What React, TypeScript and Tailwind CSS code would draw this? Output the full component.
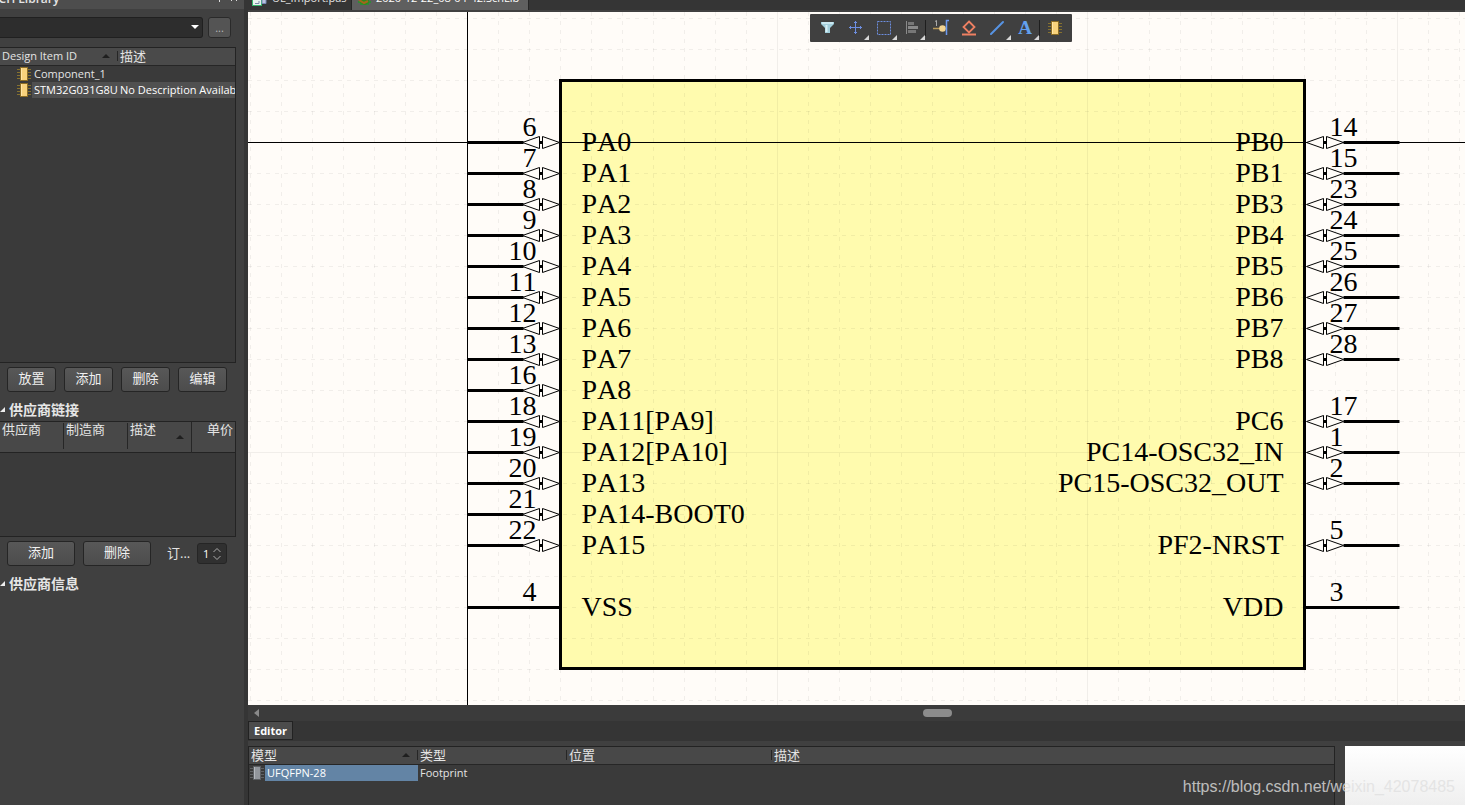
import { useState, type ReactNode } from "react";

type Pin = { row: number; num: string; name: string; plain?: boolean };

const GRID = 31;

const leftPins: Pin[] = [
  { row: 0, num: "6", name: "PA0" },
  { row: 1, num: "7", name: "PA1" },
  { row: 2, num: "8", name: "PA2" },
  { row: 3, num: "9", name: "PA3" },
  { row: 4, num: "10", name: "PA4" },
  { row: 5, num: "11", name: "PA5" },
  { row: 6, num: "12", name: "PA6" },
  { row: 7, num: "13", name: "PA7" },
  { row: 8, num: "16", name: "PA8" },
  { row: 9, num: "18", name: "PA11[PA9]" },
  { row: 10, num: "19", name: "PA12[PA10]" },
  { row: 11, num: "20", name: "PA13" },
  { row: 12, num: "21", name: "PA14-BOOT0" },
  { row: 13, num: "22", name: "PA15" },
  { row: 15, num: "4", name: "VSS", plain: true },
];

const rightPins: Pin[] = [
  { row: 0, num: "14", name: "PB0" },
  { row: 1, num: "15", name: "PB1" },
  { row: 2, num: "23", name: "PB3" },
  { row: 3, num: "24", name: "PB4" },
  { row: 4, num: "25", name: "PB5" },
  { row: 5, num: "26", name: "PB6" },
  { row: 6, num: "27", name: "PB7" },
  { row: 7, num: "28", name: "PB8" },
  { row: 9, num: "17", name: "PC6" },
  { row: 10, num: "1", name: "PC14-OSC32_IN" },
  { row: 11, num: "2", name: "PC15-OSC32_OUT" },
  { row: 13, num: "5", name: "PF2-NRST" },
  { row: 15, num: "3", name: "VDD", plain: true },
];

const buttonClass =
  "h-[25px] rounded-[3px] border border-[#252525] bg-linear-to-b from-[#585858] to-[#4c4c4c] text-[13px] leading-none text-[#f0f0f0]";

function ChipIcon({ grey = false }: { grey?: boolean }) {
  const leg = grey ? "#606265" : "#86712f";
  return (
    <svg width="14" height="14" viewBox="0 0 14 14" className="block" shapeRendering="crispEdges">
      <path d="M0 2.5H14M0 5.5H14M0 8.5H14M0 11.5H14" stroke={leg} />
      <rect x="3.5" y="0.5" width="7" height="13" fill={grey ? "#92969c" : "#f8d27c"} stroke={grey ? "#5c5f63" : "#8c6d25"} />
      <path d="M4.5 1V13" stroke={grey ? "#b4b8be" : "#ffe6a8"} />
    </svg>
  );
}

function SortArrow() {
  return (
    <svg width="8" height="4" viewBox="0 0 8 4" className="block shrink-0">
      <path d="M0 4L4 0L8 4Z" fill="#1f1f1f" />
    </svg>
  );
}

/* pair of arrows marking a bidirectional pin */
function IoArrows({ x }: { x: number }) {
  return (
    <g fill="#fffcf8" stroke="#000" strokeWidth="1">
      <path d={`M${x} 0L${x + 17} -6V6Z`} />
      <path d={`M${x + 37} 0L${x + 20} -6V6Z`} />
      <path d={`M${x + 17} 0H${x + 20}`} strokeWidth="3" />
    </g>
  );
}

function Schematic() {
  const columns = Array.from({ length: 80 }, (_, i) => i - 7);
  const rows = Array.from({ length: 50 }, (_, i) => i - 4);

  return (
    <svg className="absolute inset-0 h-full w-full [font-kerning:none]" role="img" aria-label="STM32G031G8U symbol">
      <g transform="translate(219.5 130.5)" fontFamily="'Liberation Serif', serif" fontSize="28">
        <rect x="93" y="-62" width="744" height="588" fill="#fffbae" />
        <g stroke="#000" strokeOpacity="0.055" shapeRendering="crispEdges">
          {columns.map((c) => (
            <path key={c} d={`M${c * GRID} -131V1600`} strokeDasharray={c % 10 ? "4 5" : undefined} />
          ))}
          {rows.map((r) => (
            <path key={r} d={`M-220 ${r * GRID}H2400`} strokeDasharray={r % 10 ? "4 5" : undefined} />
          ))}
        </g>
        <path d="M-220 0H4000M0 -131V3000" stroke="#000" shapeRendering="crispEdges" />
        <rect x="93" y="-62" width="744" height="588" fill="none" stroke="#000" strokeWidth="3" />

        {leftPins.map((p) => (
          <g key={p.num} transform={`translate(0 ${p.row * GRID})`}>
            <path d={p.plain ? "M0 0H92" : "M0 0H56"} stroke="#000" strokeWidth="3" />
            {!p.plain && <IoArrows x={55} />}
            <text x="69" y="-7" textAnchor="end">{p.num}</text>
            <text x="114" y="8">{p.name}</text>
          </g>
        ))}
        {rightPins.map((p) => (
          <g key={p.num} transform={`translate(0 ${p.row * GRID})`}>
            <path d={p.plain ? "M838 0H932" : "M876 0H932"} stroke="#000" strokeWidth="3" />
            {!p.plain && <IoArrows x={839} />}
            <text x="862" y="-7">{p.num}</text>
            <text x="816" y="8" textAnchor="end">{p.name}</text>
          </g>
        ))}
      </g>
    </svg>
  );
}

function Tool({ label, menu = false, children }: { label: string; menu?: boolean; children: ReactNode }) {
  return (
    <button type="button" aria-label={label} className="h-7 w-7">
      <svg width="28" height="28" viewBox="0 0 28 28" fill="none" className="block">
        {children}
        {menu && <path d="M28 21V26H23Z" fill="#d8d8d8" />}
      </svg>
    </button>
  );
}

function Toolbar() {
  return (
    <div className="absolute top-0.5 left-[562px] flex h-7 items-center rounded-[1px] bg-[#404040] px-[3px]">
      <Tool label="Filter">
        <path d="M8 8H21V10L17 14V19H12V14L8 10Z" fill="#a3cfdc" />
        <path d="M9 9H20" stroke="#d9f1f7" strokeWidth="1.5" />
        <path d="M13.5 11V18" stroke="#d9f1f7" strokeWidth="2" />
      </Tool>
      <Tool label="Move" menu>
        <path d="M14.5 7V20M8 13.5H21" stroke="#6d8ee0" />
        <path d="M13 8.5H16M13 18.5H16M9.5 12V15M19.5 12V15" stroke="#6d8ee0" />
      </Tool>
      <Tool label="Select" menu>
        <rect x="8.5" y="7.5" width="13" height="13" stroke="#6d8ee0" strokeDasharray="2 1" />
      </Tool>
      <Tool label="Align" menu>
        <path d="M9.5 7V20" stroke="#8a8a8a" />
        <path d="M11 9.5H17M11 17.5H19" stroke="#777" strokeWidth="3" />
        <path d="M11 13.5H21" stroke="#8a8a8a" strokeWidth="3" />
      </Tool>
      <span className="h-4 w-0.5 border-l border-[#1e1e1e]" />
      <Tool label="Place pin">
        <path d="M6 14.5H14" stroke="#b99a5a" strokeWidth="1.5" />
        <circle cx="15.5" cy="14.5" r="3.3" fill="#f2d391" />
        <path d="M22 6.5H19.5V21" stroke="#6d9af0" strokeWidth="1.5" />
        <path d="M8 7.5L9.5 6.5V12" stroke="#aaa" />
      </Tool>
      <Tool label="Place IEEE symbol">
        <path d="M14 7.5L19.5 13L14 18.5L8.5 13Z" stroke="#ee8062" strokeWidth="1.8" />
        <path d="M7 20.5H21" stroke="#ee8062" strokeWidth="2" />
      </Tool>
      <Tool label="Place line" menu>
        <path d="M8 20L20 8" stroke="#5794e4" strokeWidth="2" strokeLinecap="round" />
      </Tool>
      <Tool label="Place text" menu>
        <text x="14" y="20" textAnchor="middle" fontFamily="'Liberation Serif', serif" fontSize="19" fontWeight="700" fill="#62a0ee">
          A
        </text>
      </Tool>
      <span className="h-4 w-0.5 border-l border-[#1e1e1e]" />
      <span className="flex h-7 w-7 items-center justify-center">
        <button type="button" aria-label="Add component part">
          <ChipIcon />
        </button>
      </span>
    </div>
  );
}

function SectionTitle({ children }: { children: ReactNode }) {
  return (
    <h2 className="mt-1.5 flex h-[23px] items-center gap-1 text-[14px] leading-none font-bold text-[#e6e6e6]">
      <svg width="5" height="5" viewBox="0 0 5 5" className="block">
        <path d="M5 0V5H0Z" fill="#eee" />
      </svg>
      {children}
    </h2>
  );
}

function LibraryPanel() {
  const [qty, setQty] = useState(1);

  return (
    <aside className="flex w-[244px] shrink-0 flex-col bg-[#404040]">
      <header className="flex h-[9px] items-end bg-[#4d4d4d] pr-1.5 pb-0.5 text-xs leading-4 font-semibold">
        <h1 className="-ml-2 flex-1">SCH Library</h1>
        <svg width="24" height="5" viewBox="0 0 24 5" stroke="#ddd" className="-mb-0.5 self-start">
          <path d="M5.5 0V2M18 0L17 1M22 0L23 1" />
        </svg>
      </header>

      <div className="mt-2 mr-[13px] flex gap-[5px]">
        <div className="relative flex-1">
          <select
            aria-label="Library filter"
            className="block h-[21px] w-full appearance-none rounded-r-[3px] border border-l-0 border-[#202020] bg-[#2d2d2d] px-2"
          />
          <svg width="8" height="4" viewBox="0 0 8 4" className="pointer-events-none absolute top-2 right-1">
            <path d="M0 0H8L4 4Z" fill="#fff" />
          </svg>
        </div>
        <button type="button" className="h-[21px] w-[23px] rounded-[3px] border border-[#2a2a2a] bg-[#545454] leading-none text-[#bbb]">
          ...
        </button>
      </div>

      <div className="mt-[9px] mr-2 h-[316px] border border-l-0 border-[#232323] bg-[#3a3a3a]">
        <table className="w-full table-fixed border-collapse text-left">
          <colgroup>
            <col className="w-[118px]" />
            <col />
          </colgroup>
          <thead>
            <tr className="h-[17px] border-b border-[#262626] bg-[#4a4a4a]">
              <th className="p-0 pl-0.5 font-normal">
                <div className="flex h-2.5 items-center justify-between border-r border-[#262626] pr-[7px]">
                  Design Item ID <SortArrow />
                </div>
              </th>
              <th className="p-0 pl-0.5 text-[13px] leading-none font-normal">描述</th>
            </tr>
          </thead>
          <tbody>
            <tr className="h-4">
              <td className="p-0">
                <div className="flex items-center gap-[3px] pl-[17px]">
                  <ChipIcon /> Component_1
                </div>
              </td>
              <td />
            </tr>
            <tr className="h-4 text-white">
              <td className="p-0">
                <div className="flex h-4 items-center pl-[17px]">
                  <ChipIcon />
                  <span className="ml-px h-4 flex-1 overflow-hidden bg-[#505050] pl-0.5 whitespace-nowrap">STM32G031G8U6</span>
                </div>
              </td>
              <td className="overflow-hidden bg-[#505050] p-0 pl-0.5 whitespace-nowrap">No Description Available</td>
            </tr>
          </tbody>
        </table>
      </div>

      <div className="mt-1 ml-[7px] flex gap-2">
        {["放置", "添加", "删除", "编辑"].map((label) => (
          <button key={label} type="button" className={`${buttonClass} w-[49px] pb-0.5`}>
            {label}
          </button>
        ))}
      </div>

      <SectionTitle>供应商链接</SectionTitle>
      <div className="mr-2 h-[116px] border border-l-0 border-[#232323] bg-[#3a3a3a]">
        <table className="w-full table-fixed border-collapse text-left text-[13px] leading-none">
          <thead>
            <tr className="h-[30px] border-b border-[#232323] bg-[#484848] align-top">
              <th className="w-16 p-0 font-normal">
                <div className="mt-px h-[26px] border-r border-[#262626] pl-0.5">供应商</div>
              </th>
              <th className="w-16 p-0 font-normal">
                <div className="mt-px h-[26px] border-r border-[#262626] pl-0.5">制造商</div>
              </th>
              <th className="w-[63px] border-r border-[#262626] p-0 font-normal">
                <div className="mt-px flex items-start justify-between pr-[7px] pl-0.5">
                  描述
                  <span className="pt-3">
                    <SortArrow />
                  </span>
                </div>
              </th>
              <th className="p-0 font-normal">
                <div className="mt-px pr-0.5 text-right">单价</div>
              </th>
            </tr>
          </thead>
        </table>
      </div>

      <div className="mt-1 ml-[7px] flex items-center gap-2">
        <button type="button" className={`${buttonClass} w-[68px] pb-0.5`}>添加</button>
        <button type="button" className={`${buttonClass} w-[68px] pb-0.5`}>删除</button>
        <label htmlFor="qty" className="ml-2 w-[22px] text-[13px] leading-none whitespace-nowrap">
          订...
        </label>
        <div className="flex h-[21px] w-[30px] items-center rounded-[3px] border border-[#252525] bg-[#303030] pl-[5px]">
          <input
            id="qty"
            value={qty}
            onChange={(e) => setQty(Number(e.target.value) || 0)}
            className="w-2.5 bg-transparent text-white outline-none"
          />
          <div className="flex flex-col gap-1">
            <button type="button" aria-label="Increase" onClick={() => setQty(qty + 1)}>
              <svg width="8" height="4" viewBox="0 0 8 4" fill="none" stroke="#aaa" className="block">
                <path d="M0.5 4L4 0.5L7.5 4" />
              </svg>
            </button>
            <button type="button" aria-label="Decrease" onClick={() => setQty(Math.max(0, qty - 1))}>
              <svg width="8" height="4" viewBox="0 0 8 4" fill="none" stroke="#aaa" className="block">
                <path d="M0.5 0L4 3.5L7.5 0" />
              </svg>
            </button>
          </div>
        </div>
      </div>

      <SectionTitle>供应商信息</SectionTitle>
    </aside>
  );
}

function DocumentTabs() {
  return (
    <nav className="flex h-3 items-start border-b-2 border-[#404040] bg-[#353535] leading-4 whitespace-nowrap">
      <a href="#import" className="flex h-2.5 w-[103px] items-end gap-[5px] pb-1 pl-1">
        <svg width="15" height="15" viewBox="0 0 15 15" className="block">
          <rect x="0.5" y="0.5" width="9" height="14" fill="#e8f4ee" stroke="#35b56b" />
          <path d="M3 12.5H7V10" fill="none" stroke="#7a86a8" />
          <path d="M10 3H14V12.5H10Z" fill="#b9c3dc" stroke="#7486b5" />
        </svg>
        UL_Import.pas
      </a>
      <a href="#schlib" className="flex h-2.5 w-[178px] items-end gap-[5px] border-x border-[#262626] bg-[#5f5f5f] pb-1 pl-1.5 text-white">
        <svg width="13" height="12" viewBox="0 0 13 12" className="block">
          <path d="M0 8H13M2 10H11" stroke="#1e9a2c" strokeWidth="1.5" />
          <path d="M2 0H11V9L7 11L2 9Z" fill="#2a8a1f" />
          <path d="M1 6L6 9L10 7" fill="none" stroke="#a4651c" strokeWidth="2" />
        </svg>
        2020-12-22_08-04-42.SchLib
      </a>
    </nav>
  );
}

function ModelEditor() {
  return (
    <section>
      <div className="flex h-4 items-center bg-[#3b3b3b] pl-[5px]">
        <svg width="6" height="8" viewBox="0 0 6 8" className="block">
          <path d="M6 0V8L1 4Z" fill="#8a8a8a" />
        </svg>
        <span className="ml-[664px] h-2 w-[29px] rounded-full bg-[#8c8c8c]" />
      </div>
      <div className="flex h-5 bg-[#353535]">
        <button type="button" className="h-[19px] w-[45px] border border-[#222] bg-[#4c4c4c] font-bold text-white">
          Editor
        </button>
      </div>
      <div className="flex h-16 gap-2.5 bg-[#404040] pt-[5px]">
        <div className="flex-1 border border-b-0 border-[#232323] bg-[#3a3a3a]">
          <table className="w-full table-fixed border-collapse text-left">
            <colgroup>
              <col className="w-[169px]" />
              <col className="w-[149px]" />
              <col className="w-[205px]" />
              <col />
            </colgroup>
            <thead>
              <tr className="h-[17px] border-b border-[#262626] bg-[#484848] text-[13px] leading-none">
                <th className="p-0 pl-0.5 font-normal">
                  <div className="flex h-2.5 items-center justify-between border-r border-[#262626] pr-[7px]">
                    模型 <SortArrow />
                  </div>
                </th>
                <th className="p-0 pl-0.5 font-normal">
                  <div className="flex h-2.5 items-center border-r border-[#262626]">类型</div>
                </th>
                <th className="p-0 pl-0.5 font-normal">
                  <div className="flex h-2.5 items-center border-r border-[#262626]">位置</div>
                </th>
                <th className="p-0 pl-0.5 font-normal">
                  <div className="flex h-2.5 items-center">描述</div>
                </th>
              </tr>
            </thead>
            <tbody>
              <tr className="h-4">
                <td className="p-0">
                  <div className="flex h-4 items-center gap-px pl-px">
                    <ChipIcon grey />
                    <span className="h-4 flex-1 bg-[#6384a5] pl-0.5 text-white">UFQFPN-28</span>
                  </div>
                </td>
                <td className="p-0 pl-0.5">Footprint</td>
                <td />
                <td />
              </tr>
            </tbody>
          </table>
        </div>
        <div className="w-[120px] bg-linear-to-b from-white to-[#efefef]" />
      </div>
    </section>
  );
}

export default function App() {
  return (
    <div className="relative flex h-screen overflow-hidden bg-[#353535] font-['Open_Sans','Noto_Sans_CJK_SC',sans-serif] text-[11px] leading-4 text-[#e4e4e4]">
      <LibraryPanel />
      <div className="ml-1 flex min-w-0 flex-1 flex-col">
        <DocumentTabs />
        <main className="relative flex-1 overflow-hidden bg-[#fffcf8]">
          <Schematic />
          <Toolbar />
        </main>
        <ModelEditor />
      </div>
      <p className="absolute right-2.5 bottom-1.5 font-['Liberation_Sans',sans-serif] text-base leading-6 text-[#e0e0e0]/80">
        https://blog.csdn.net/weixin_42078485
      </p>
    </div>
  );
}
